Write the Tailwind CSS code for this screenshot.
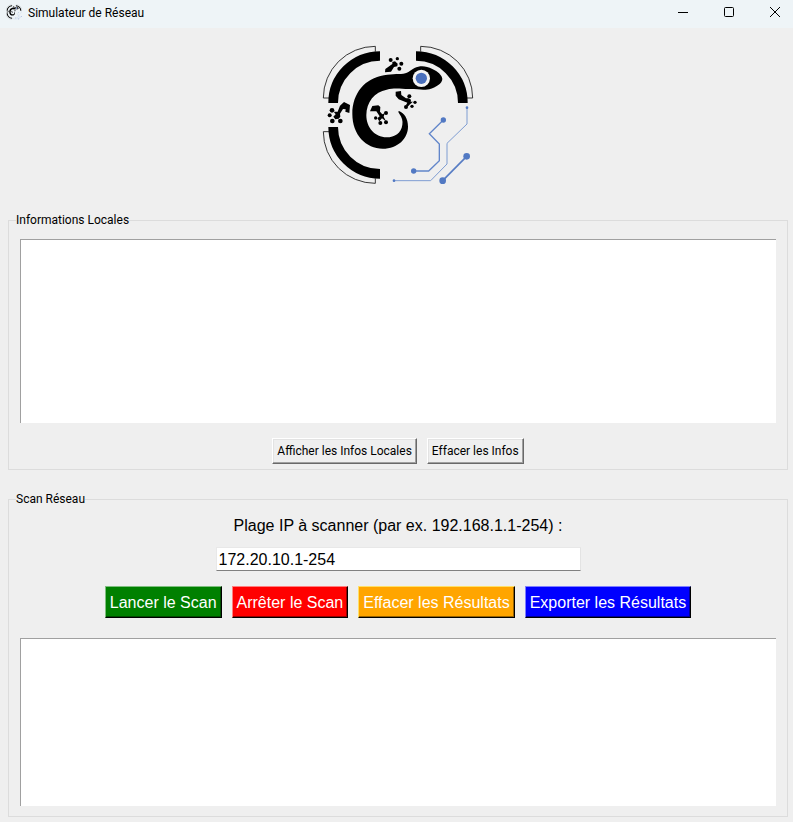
<!DOCTYPE html>
<html lang="fr">
<head>
<meta charset="utf-8">
<meta name="viewport" content="width=device-width, initial-scale=1">
<title>Simulateur de Réseau</title>
<script src="https://cdn.jsdelivr.net/npm/@tailwindcss/browser@4"></script>
</head>
<body class="flex min-h-screen flex-col bg-[#efefef] font-['Roboto','Noto_Sans',sans-serif] text-xs text-black">
<svg class="hidden" aria-hidden="true">
  <symbol id="gecko" viewBox="36 30 456 420">
    <g fill="none" stroke="#000" stroke-width="29">
      <path d="M210 63A140.500 140.500 0 0 0 69.500 204"/>
      <path d="M318 63A140.500 140.500 0 0 1 458.500 204"/>
      <path d="M210 416.500A140.500 140.500 0 0 1 69.500 276"/>
    </g>
    <g fill="none" stroke="#111" stroke-width="2.500">
      <path d="M196 50V34A156 155 0 0 0 40 189H57"/>
      <path d="M332 50V34A156 155 0 0 1 488 189H471"/>
      <path d="M196 430V445A156 155 0 0 1 40 290H57"/>
    </g>
    <path d="M397 132C397 122 383 109 367 102C352 94 338 92 325 95C308 98 299 111 286 115C270 119 250 116 222 121C165 130 127 175 127 237C127 300 168 341 218 341C264 341 294 310 294 275C294 251 283 234 267 228C264 229 265 232 268 236C276 247 279 258 277 269C274 294 254 307 230 307C194 307 169 277 169 241C169 200 194 171 230 164C260 157 280 164 306 162C331 161 343 167 358 163C378 157 397 145 397 132Z"/>
    <circle cx="334" cy="130" r="26" fill="#f4f4f4"/>
    <circle cx="334" cy="130" r="17" fill="#4a70bd"/>
    <path d="M225 112L226 102L247 87L247 81L255 79L263 86L262 94L252 96L243 110Z"/>
    <circle cx="242" cy="75" r="6"/><circle cx="262" cy="71" r="5"/><circle cx="274" cy="86" r="6"/><circle cx="268" cy="101" r="6"/>
    <path d="M257 170L273 168L274 180L288 190L296 190L303 194L302 200L309 200L300 208L293 215L288 210L292 203L279 198L266 193L257 182Z"/>
    <circle cx="298" cy="184" r="6"/><circle cx="315" cy="202" r="5"/><circle cx="306" cy="214" r="5"/><circle cx="288" cy="216" r="6"/>
    <path d="M180 229L187 213L205 211L211 216L210 230L217 238L224 235L221 245L228 259L216 250L208 259L202 250L209 244L199 229Z"/>
    <circle cx="228" cy="234" r="6"/><circle cx="228" cy="262" r="6"/><circle cx="211" cy="264" r="6"/><circle cx="197" cy="249" r="5"/>
    <path d="M120 210L118 234L106 230L107 223L99 222L90 236L91 245L86 251L76 253L70 245L77 238L71 230L83 230L90 212L102 201Z"/>
    <circle cx="66" cy="226" r="7"/><circle cx="59" cy="241" r="6"/><circle cx="67" cy="258" r="7"/><circle cx="91" cy="258" r="7"/>
    <g fill="none" stroke="#7f9dd2" stroke-width="3">
      <path d="M471 218V267L411 325V387L362 437H252"/>
      <path d="M400 255L358 296L388 327V377L356 408H311" stroke="#6286ca" stroke-width="4"/>
      <path d="M470 364L398 437" stroke="#587dc4" stroke-width="5"/>
    </g>
    <g fill="#5279c3">
      <circle cx="471" cy="218" r="4"/><circle cx="252" cy="437" r="4"/><circle cx="400" cy="255" r="8"/><circle cx="311" cy="408" r="8"/><circle cx="470" cy="364" r="10"/><circle cx="398" cy="437" r="10"/>
    </g>
  </symbol>
</svg>

<header class="flex h-7 items-center bg-[#eef4f7] pr-3 pb-1 pl-1.5">
  <svg class="mr-1.5 h-4 w-4" aria-hidden="true"><use href="#gecko"/></svg>
  <h1 class="pt-0.5">Simulateur de Réseau</h1>
  <div class="ml-auto flex gap-[34px]">
    <button type="button" aria-label="Réduire"><svg class="h-3 w-3" viewBox="0 0 12 12" fill="none" stroke="#000"><path d="M1 6.500H11"/></svg></button>
    <button type="button" aria-label="Agrandir"><svg class="h-3 w-3" viewBox="0 0 12 12" fill="none" stroke="#000"><rect x="1.500" y="1.500" width="9" height="9" rx="1"/></svg></button>
    <button type="button" aria-label="Fermer"><svg class="h-3 w-3" viewBox="0 0 12 12" fill="none" stroke="#000"><path d="M1 1L11 11M11 1L1 11"/></svg></button>
  </div>
</header>

<main class="flex flex-col pr-[5px] pl-2">
  <div class="flex justify-center pt-[17px] pb-[27px]">
    <svg class="h-[140px] w-[152px]" role="img" aria-label="Logo gecko"><use href="#gecko"/></svg>
  </div>

  <fieldset class="flex flex-col border border-[#dcdcdc] px-[11px] pt-[11px] pb-[5px]">
    <legend class="-ml-1 leading-4">Informations Locales</legend>
    <textarea aria-label="Informations Locales" readonly class="h-46 w-full resize-none border-t border-l border-[#a0a0a0] bg-white outline-none"></textarea>
    <div class="mt-[15px] flex justify-center gap-2.5">
      <button type="button" class="h-[26px] border border-t-white border-r-[#696969] border-b-[#696969] border-l-white px-1 whitespace-nowrap shadow-[inset_-1px_-1px_#a0a0a0,inset_1px_1px_#e3e3e3]">Afficher les Infos Locales</button>
      <button type="button" class="h-[26px] border border-t-white border-r-[#696969] border-b-[#696969] border-l-white px-1 whitespace-nowrap shadow-[inset_-1px_-1px_#a0a0a0,inset_1px_1px_#e3e3e3]">Effacer les Infos</button>
    </div>
  </fieldset>

  <fieldset class="mt-[21px] flex flex-col items-center border border-[#dcdcdc] px-[11px] pt-[7px] pb-2.5">
    <legend class="-ml-1 leading-4">Scan Réseau</legend>
    <label for="plage" class="font-['Liberation_Sans',Arial,sans-serif] text-base">Plage IP à scanner (par ex. 192.168.1.1-254) :</label>
    <input id="plage" type="text" value="172.20.10.1-254" class="mt-[9px] h-6 w-[365px] max-w-full border border-t-[#e8e8e8] border-r-[#e3e3e3] border-b-[#808080] border-l-[#e8e8e8] bg-white px-0.5 pt-0.5 font-['Liberation_Sans',Arial,sans-serif] text-base outline-none">
    <div class="mt-[15px] flex flex-wrap justify-center gap-2.5 font-['Liberation_Sans',Arial,sans-serif] text-base text-white">
      <button type="button" class="h-8 border border-t-[#7fbf7f] border-r-black border-b-black border-l-[#7fbf7f] bg-[#008000] px-1 pt-0.5 shadow-[inset_-1px_-1px_#004d00]">Lancer le Scan</button>
      <button type="button" class="h-8 border border-t-[#ff7f7f] border-r-black border-b-black border-l-[#ff7f7f] bg-[#ff0000] px-1 pt-0.5 shadow-[inset_-1px_-1px_#990000]">Arrêter le Scan</button>
      <button type="button" class="h-8 border border-t-[#ffe066] border-r-black border-b-black border-l-[#ffe066] bg-[#ffa500] px-1 pt-0.5 shadow-[inset_-1px_-1px_#996300]">Effacer les Résultats</button>
      <button type="button" class="h-8 border border-t-[#7f7fff] border-r-black border-b-black border-l-[#7f7fff] bg-[#0000ff] px-1 pt-0.5 shadow-[inset_-1px_-1px_#000099]">Exporter les Résultats</button>
    </div>
    <textarea aria-label="Résultats du scan" readonly class="mt-5 h-42 w-full resize-none border-t border-l border-[#a0a0a0] bg-white outline-none"></textarea>
  </fieldset>
</main>
</body>
</html>
